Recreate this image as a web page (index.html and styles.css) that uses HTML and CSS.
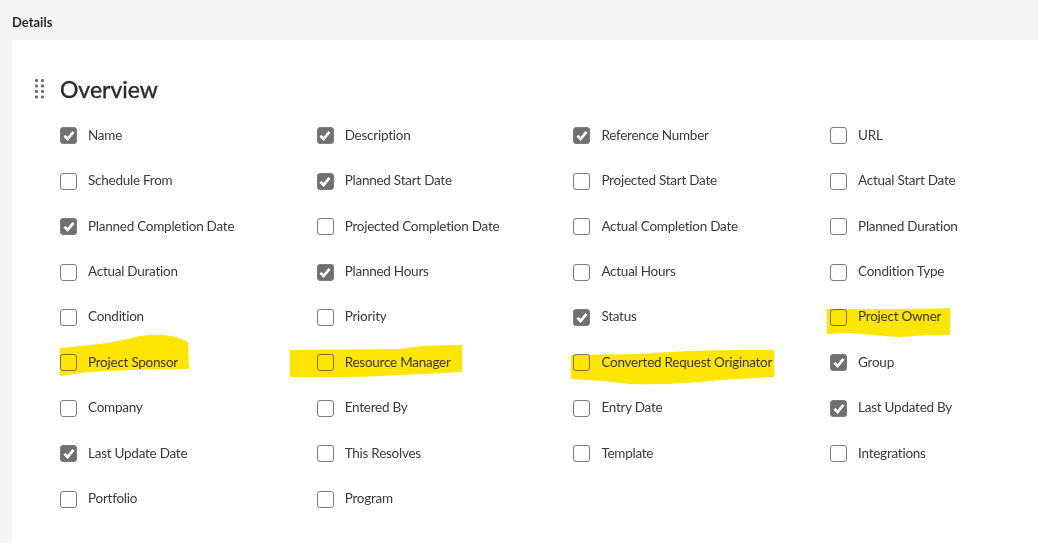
FILE: index.html
```html
<!DOCTYPE html>
<html lang="en">
<head>
    <meta charset="UTF-8">
    <title>Details</title>
    <link rel="stylesheet" href="styles.css">
</head>
<body>
    <div class="page-title">Details</div>
    <div class="card">
        <div class="section-head">
            <svg class="drag-handle" width="10" height="20" viewBox="0 0 10 20" fill="#6e6e6e">
                <rect x="0" y="0" width="3" height="3" rx="1"/><rect x="6" y="0" width="3" height="3" rx="1"/>
                <rect x="0" y="5.5" width="3" height="3" rx="1"/><rect x="6" y="5.5" width="3" height="3" rx="1"/>
                <rect x="0" y="11" width="3" height="3" rx="1"/><rect x="6" y="11" width="3" height="3" rx="1"/>
                <rect x="0" y="16.5" width="3" height="3" rx="1"/><rect x="6" y="16.5" width="3" height="3" rx="1"/>
            </svg>
            <h2>Overview</h2>
        </div>
        <div class="fields" id="fields"></div>
    </div>

    <svg class="marker" width="1038" height="543" viewBox="0 0 1038 543" fill="#ffe600">
        <path d="M60 348 L100 344 Q125 340 140 336 Q160 333 176 337 L188 342 L189 369 L130 370 L90 372 L60 376 Z"/>
        <path d="M290 350 L400 349 Q420 345 462 345 L462 372 L400 375 Q350 378 290 377 Z"/>
        <path d="M571 355 L640 354 Q690 350 740 350 L774 350 L774 377 L720 380 Q680 385 630 384 Q600 380 571 379 Z"/>
        <path d="M827 309 L880 309 Q920 309 950 308 L950 335 Q920 335 900 337 Q870 335 850 333 L827 334 Z"/>
    </svg>

    <script src="fields.js"></script>
</body>
</html>
```

FILE: styles.css
```css
html, body {
    height: 100%;
}
body {
    margin: 0;
    background-color: #f5f5f5;
    color: #2c2c2c;
    font-family: Lato, "Noto Sans", Arial, sans-serif;
    overflow: hidden;
}
.page-title {
    height: 40px;
    padding-left: 12px;
    box-sizing: border-box;
    line-height: 44px;
    font-size: 13px;
    font-weight: 700;
}
.card {
    margin-left: 12px;
    height: 503px;
    background-color: #fff;
    box-sizing: border-box;
    padding: 32px 0 0 22px;
}
.section-head {
    display: flex;
    align-items: center;
    gap: 15px;
    height: 34px;
}
.section-head h2 {
    margin: 0;
    font-size: 23px;
    font-weight: 400;
    -webkit-text-stroke: 0.4px #2c2c2c;
    line-height: 34px;
}
.drag-handle {
    margin-left: 1px;
}
.fields {
    display: grid;
    grid-template-columns: repeat(4, 256.7px);
    grid-auto-rows: 45.45px;
    margin: 7px 0 0 26px;
}
.field {
    display: flex;
    align-items: center;
    gap: 11px;
    font-size: 13.5px;
    letter-spacing: -0.25px;
    color: #3a3a3a;
}
.field-label {
    position: relative;
    top: -1px;
}
.box {
    width: 15px;
    height: 15px;
    flex: none;
    border: 1.5px solid #7c7c7c;
    border-radius: 3px;
    display: flex;
    align-items: center;
    justify-content: center;
}
.field.checked .box {
    background-color: #707070;
}
.marker {
    position: absolute;
    top: 0;
    left: 0;
    mix-blend-mode: multiply;
    pointer-events: none;
}
```

FILE: fields.js
```js
const fields = [
    ['Name', 1], ['Description', 1], ['Reference Number', 1], ['URL', 0],
    ['Schedule From', 0], ['Planned Start Date', 1], ['Projected Start Date', 0], ['Actual Start Date', 0],
    ['Planned Completion Date', 1], ['Projected Completion Date', 0], ['Actual Completion Date', 0], ['Planned Duration', 0],
    ['Actual Duration', 0], ['Planned Hours', 1], ['Actual Hours', 0], ['Condition Type', 0],
    ['Condition', 0], ['Priority', 0], ['Status', 1], ['Project Owner', 0],
    ['Project Sponsor', 0], ['Resource Manager', 0], ['Converted Request Originator', 0], ['Group', 1],
    ['Company', 0], ['Entered By', 0], ['Entry Date', 0], ['Last Updated By', 1],
    ['Last Update Date', 1], ['This Resolves', 0], ['Template', 0], ['Integrations', 0],
    ['Portfolio', 0], ['Program', 0]
];

const tick = '<svg width="12" height="11" viewBox="0 0 11 10"><path d="M1.3 5.3 L4.2 8.2 L9.6 1.6" fill="none" stroke="#fff" stroke-width="2.5"/></svg>';
const list = document.getElementById('fields');

fields.forEach(function(item) {
    const row = document.createElement('div');
    row.className = item[1] ? 'field checked' : 'field';
    row.innerHTML = '<span class="box">' + (item[1] ? tick : '') + '</span><span class="field-label">' + item[0] + '</span>';
    list.appendChild(row);
});
```
